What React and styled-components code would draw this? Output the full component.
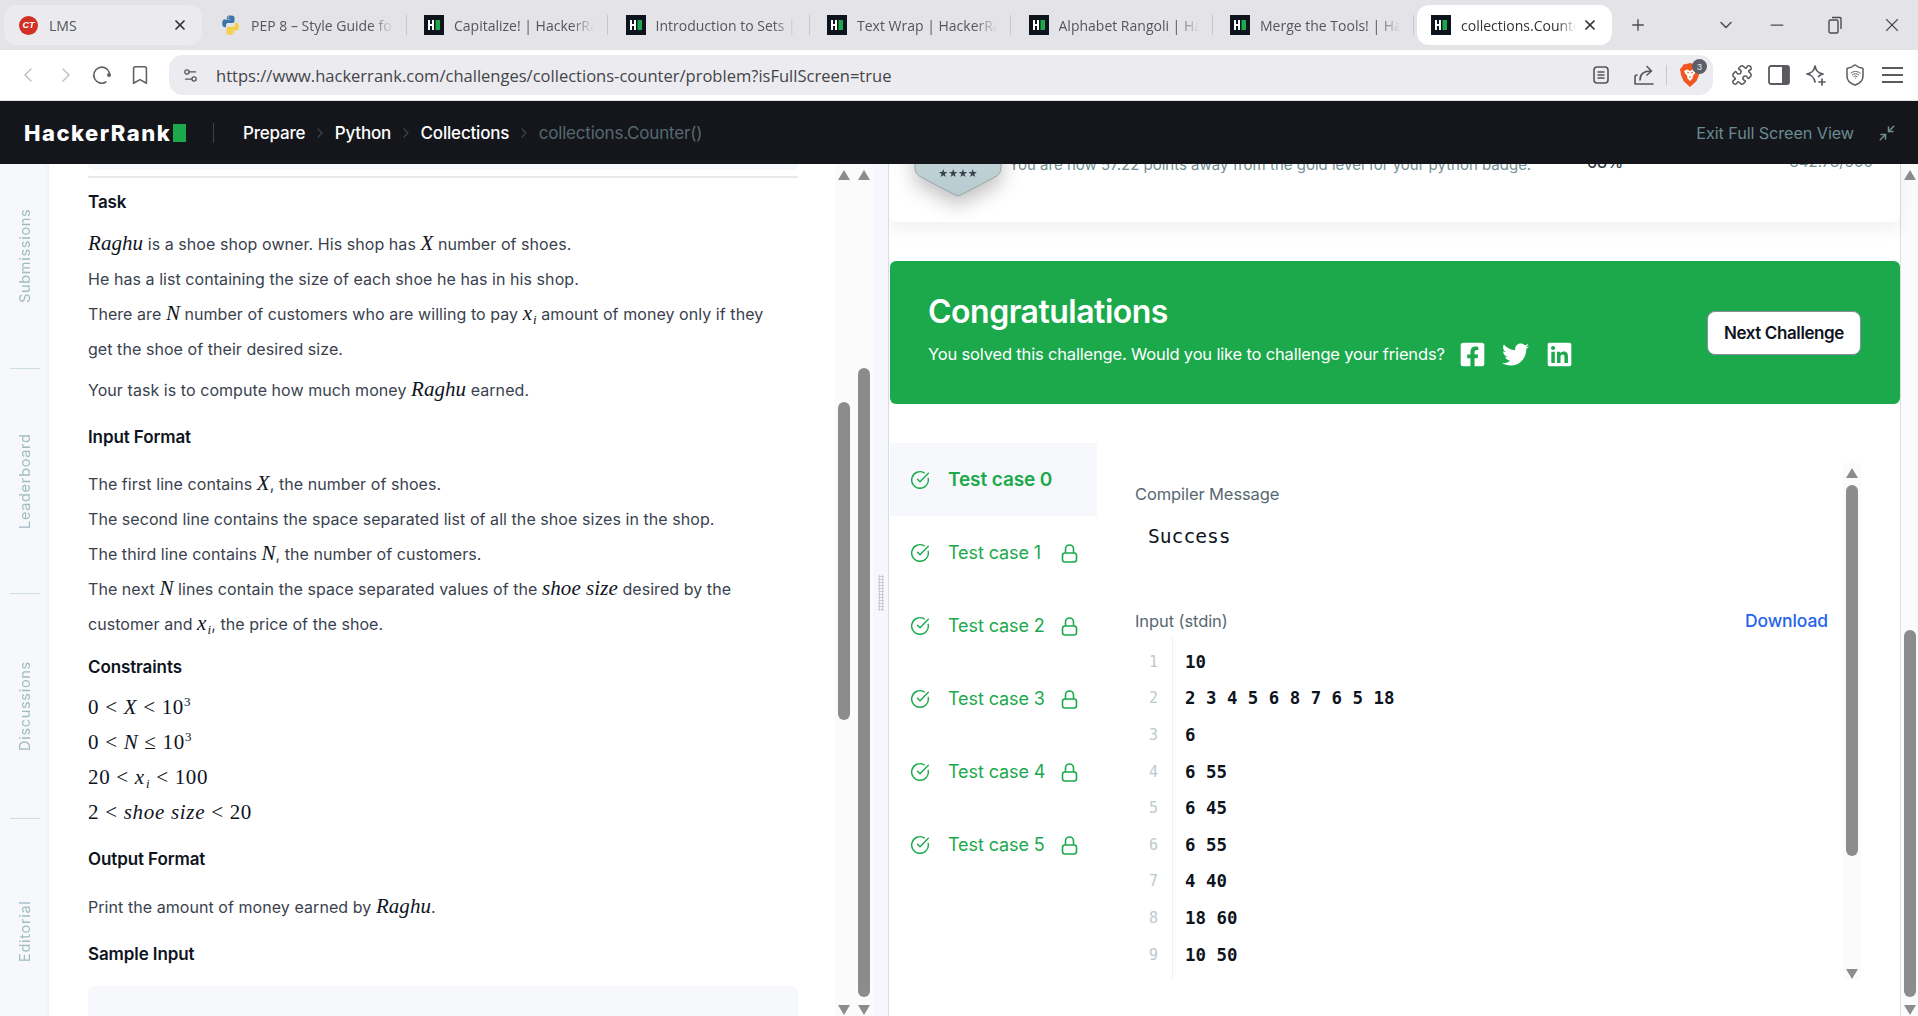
import React from "react";
import styled, { createGlobalStyle } from "styled-components";
import {
  ChevronLeft, ChevronRight, Bookmark, X, Plus, ChevronDown, Minus, Settings2,
  Puzzle, Shield, Wifi, Minimize2, CircleCheckBig,
} from "lucide-react";
import { FaFacebookSquare, FaTwitter, FaLinkedin } from "react-icons/fa";

const Global = createGlobalStyle`
  html, body { margin: 0; padding: 0; background: #fff; overflow: hidden; }
  * { box-sizing: border-box; }
  body { font-family: Inter, "Noto Sans", sans-serif; }
`;

const Page = styled.div`
  width: 1918px; height: 1016px; display: flex; flex-direction: column; overflow: hidden;
`;

/* ---------- browser chrome ---------- */
const TabStrip = styled.div`
  height: 50px; background: #e3e3e8; display: flex; align-items: center; padding-left: 4px; flex: none;
`;
const Tab = styled.div`
  width: ${p => p.$w || 201.5}px; height: 40px; display: flex; align-items: center; flex: none;
  padding: 0 14px 0 ${p => p.$pl || 16}px; border-radius: 12px; position: relative;
  background: ${p => p.$active ? "#fff" : p.$hover ? "#ebebef" : "transparent"};
  margin-left: ${p => p.$ml || 0}px;
  ${p => p.$sep && `&::after { content: ""; position: absolute; right: 0; top: 10px; height: 20px; width: 1px; background: #c6c6cc; }`}
`;
const TabTitle = styled.span`
  flex: 1; min-width: 0; margin-left: ${p => p.$ml || 10}px; white-space: nowrap; overflow: hidden;
  font-family: "Open Sans", sans-serif; font-size: 14px; color: ${p => p.$active ? "#333" : "#55555d"};
  mask-image: ${p => p.$plain ? "none" : "linear-gradient(to right, #000 84%, transparent 100%)"};
`;
const TabClose = styled(X)` width: 16px; height: 16px; color: #333; stroke-width: 2.6; flex: none; margin-left: 6px; `;
const LmsLogo = styled.span`
  width: 19px; height: 19px; border-radius: 50%; background: #d13025; color: #fff; flex: none;
  font: italic 700 9px "Liberation Sans", sans-serif; display: flex; align-items: center; justify-content: center;
`;
const WinControls = styled.div` display: flex; align-items: center; color: #4b4b52; flex: none; `;
const WinBtn = styled.span` display: flex; margin-left: ${p => p.$ml}px; `;

const AddressRow = styled.div`
  height: 51px; background: #fff; display: flex; align-items: flex-start; flex: none;
  border-bottom: 1px solid #e4e4e8; padding-top: 5px; position: relative;
`;
const NavIcons = styled.div` width: 169px; height: 40px; display: flex; align-items: center; padding-left: 16px; color: #5f6064; flex: none; `;
const Nav = styled.span` display: flex; margin-left: ${p => p.$ml || 0}px; color: ${p => p.$c || "#5f6064"}; `;
const AddressBox = styled.div`
  width: 1544px; height: 40px; background: #ebebf0; border-radius: 14px; display: flex; align-items: center;
  padding: 0 5px 0 13px; flex: none; color: #55565a;
`;
const Url = styled.span`
  margin-left: 17px; flex: 1; font-family: "Open Sans", sans-serif; font-size: 16.55px; color: #44454a; white-space: nowrap;
`;
const Divider = styled.span` width: 1px; height: 20px; background: #c8c8cf; margin: 0 13px 0 11px; `;
const BraveWrap = styled.span` position: relative; display: flex; width: 28px; height: 24px; `;
const BraveBadge = styled.span`
  position: absolute; right: 1px; top: -4px; width: 15px; height: 15px; border-radius: 50%; background: #5d5f68; color: #e8e8ec;
  font: 9px "Liberation Sans", sans-serif; display: flex; align-items: center; justify-content: center;
`;
const RightIcons = styled.div` flex: 1; height: 40px; display: flex; align-items: center; color: #5a5b60; padding-left: 18px; `;

/* ---------- site header ---------- */
const Header = styled.header`
  height: 63px; background: #14161b; display: flex; align-items: center; padding: 0 22px 0 24px; flex: none; position: relative; z-index: 2;
`;
const Logo = styled.div`
  font-family: Inter, sans-serif; font-weight: 800; font-size: 22px; color: #fff; letter-spacing: 1.5px; display: flex; align-items: center; width: 189px;
`;
const LogoBlock = styled.span` width: 13px; height: 18px; background: #1ba94c; margin-left: 2px; `;
const HeaderRule = styled.span` width: 1px; height: 20px; background: #39424e; margin-right: 29px; `;
const Crumb = styled.span`
  font-size: 17px; font-weight: ${p => p.$dim ? 400 : 500}; color: ${p => p.$dim ? "#576871" : "#fff"}; letter-spacing: -0.2px; white-space: nowrap;
`;
const CrumbSep = styled(ChevronRight)` width: 16px; height: 16px; color: #39424e; margin: 0 7px 0 6.5px; flex: none; `;
const ExitText = styled.span` margin-left: auto; font-size: 16.25px; color: #6a8a92; letter-spacing: -0.1px; `;
const ExitIcon = styled(Minimize2)` width: 18px; height: 18px; color: #738f93; margin-left: 24px; `;

/* ---------- main ---------- */
const Main = styled.div` flex: 1; display: flex; min-height: 0; overflow: hidden; `;
const SideNav = styled.nav`
  width: 49px; flex: none; background: #f7f8fc; overflow: hidden; display: flex; flex-direction: column; align-items: center;
  box-shadow: inset -4px 0 4px -4px rgba(57,66,78,.1);
`;
const SideItem = styled.div`
  height: 225px; flex: none; display: flex; flex-direction: column; align-items: center; margin-top: ${p => p.$mt || 0}px;
`;
const SideLabel = styled.span`
  flex: 1; writing-mode: vertical-rl; transform: rotate(180deg); text-align: center; font-size: 14.5px; letter-spacing: .7px; color: #9fbcc2;
`;
const SideRule = styled.span` width: 30px; height: 1px; background: #cddfe2; flex: none; `;

const LeftPane = styled.section` width: 786px; flex: none; background: #fff; padding-left: 39px; overflow: hidden; `;
const Problem = styled.div` width: 710px; color: #39424e; font-size: 16px; letter-spacing: 0.06px; `;
const SampleTail = styled.div` height: 6px; background: #f7f8fc; border-radius: 0 0 6px 6px; `;
const Rule = styled.hr` margin: 6px 0 0; border: 0; height: 2px; background: #e7eaec; `;
const H = styled.h3`
  margin: ${p => p.$mt}px 0 0; font-size: 17px; line-height: 24px; font-weight: 600; letter-spacing: -0.1px; color: #0e141e;
`;
const P = styled.p` margin: ${p => p.$mt}px 0 0; line-height: 35px; color: #39424e; `;
const M = styled.span`
  font-family: "Liberation Serif", serif; font-style: ${p => p.$up ? "normal" : "italic"}; font-size: 21px; line-height: 0; color: #0e141e;
  ${p => p.$up && "letter-spacing: .7px;"}
`;
const Sub = styled.span` font-size: 13px; position: relative; top: 4px; margin-left: 1px; `;
const Sup = styled.span` font-size: 13px; position: relative; top: -8px; font-style: normal; `;
const CodeBox = styled.div` margin-top: 20px; height: 60px; background: #f7f8fc; border-radius: 6px; `;

/* scrollbars */
const ScrollGroup = styled.div` width: 38px; flex: none; background: #fbfbfb; display: flex; padding-left: 3px; gap: 8px; `;
const Bar = styled.div`
  width: ${p => p.$w || 12}px; flex: none; display: flex; flex-direction: column; align-items: center; padding: ${p => p.$pad ?? 6}px 0 1px;
`;
const Arrow = styled.span`
  width: 0; height: 0; flex: none; border-left: 6px solid transparent; border-right: 6px solid transparent;
  ${p => p.$down ? "border-top: 10px solid #8c8c8c;" : "border-bottom: 10px solid #8c8c8c;"}
`;
const Thumb = styled.span`
  width: 100%; flex: none; background: #8c8c8c; border-radius: 6px; margin-top: ${p => p.$top}px; height: ${p => p.$h}px;
`;
const BarFill = styled.span` flex: 1; `;
const Gutter = styled.div`
  width: 16px; flex: none; background: #f6f7fc; border-right: 1px solid #dcdce6; display: flex; align-items: flex-start; justify-content: center; padding-top: 411px;
`;
const Grip = styled.span`
  width: 6px; height: 36px; background-image: radial-gradient(circle, #c9ccd4 1px, transparent 1.2px); background-size: 3px 3px;
`;

const RightPane = styled.section` flex: 1; display: flex; min-width: 0; overflow: hidden; `;
const RightContent = styled.div` width: 1011px; flex: none; background: #fff; `;
const RightBar = styled.div` flex: 1; background: #fbfbfb; border-left: 1px solid #dcdce6; display: flex; justify-content: center; `;

const Card = styled.div`
  height: 120px; margin-top: -62px; background: #fff; border-radius: 8px; display: flex; padding-right: 27px; position: relative;
  box-shadow: 0 8px 16px rgba(57,66,78,.07);
`;
const Badge = styled.svg` width: 90px; height: 94px; margin: 2px 0 0 24px; flex: none; filter: drop-shadow(0 8px 10px rgba(0,0,0,.25)); overflow: visible; `;
const CardText = styled.span` width: 578px; margin-left: 6px; padding-top: 52px; font-size: 15px; line-height: 22px; color: #738f93; white-space: nowrap; flex: none; `;
const Percent = styled.span` padding-top: 49px; font-size: 16px; line-height: 22px; font-weight: 500; color: #39424e; `;
const Points = styled.span` margin-left: auto; padding-top: 49px; font-size: 15px; line-height: 22px; color: #738f93; `;

const Banner = styled.div`
  margin: 39px 0 0 1px; height: 143px; background: #1ba94c; border-radius: 6px; display: flex; align-items: center; justify-content: space-between;
  padding: 0 39px 0 38px; color: #fff;
`;
const BannerText = styled.div` margin-top: -7px; `;
const BannerTitle = styled.h2` margin: 0; font-size: 32px; line-height: 40px; font-weight: 600; letter-spacing: -0.5px; `;
const BannerSub = styled.div` margin-top: 10px; height: 24px; display: flex; align-items: center; font-size: 16.5px; letter-spacing: -0.17px; `;
const Social = styled.span` display: flex; margin-left: ${p => p.$ml}px; font-size: 27px; `;
const NextBtn = styled.button`
  width: 154px; height: 44px; border-radius: 8px; background: #fff; border: 1px solid #8d8d9e; font-family: inherit; font-size: 17px; font-weight: 600;
  color: #0e141e; letter-spacing: -0.4px; padding: 0;
`;

const TestArea = styled.div` margin: 39px 0 0 1px; display: flex; `;
const CaseList = styled.div` width: 207px; flex: none; `;
const CaseRow = styled.div`
  height: 73px; display: flex; align-items: center; padding-left: 20px; color: #1ba94c;
  background: ${p => p.$active ? "#f7f8fc" : "transparent"};
`;
const CaseText = styled.span` margin-left: 18px; font-size: ${p => p.$active ? 19 : 18}px; font-weight: ${p => p.$active ? 600 : 400}; letter-spacing: -0.1px; width: 112px; white-space: nowrap; `;
const Detail = styled.div` flex: 1; padding-left: 38px; display: flex; min-width: 0; `;
const DetailBody = styled.div` width: 694px; flex: none; padding-top: 39px; `;
const Label = styled.div` font-size: 16.5px; line-height: 24px; color: #576871; letter-spacing: -0.1px; `;
const Success = styled.pre`
  margin: 19px 0 0 13px; font-family: "DejaVu Sans Mono", monospace; font-size: 19.6px; line-height: 24px; color: #0e141e;
`;
const InputHead = styled.div` margin-top: 60px; display: flex; justify-content: space-between; `;
const Download = styled.span` font-size: 17.5px; line-height: 24px; font-weight: 500; color: #2563eb; letter-spacing: -0.1px; margin-right: 1px; `;
const CodeGrid = styled.div` margin-top: 5px; height: 340px; padding-top: 5.5px; display: flex; flex-direction: column; `;
const CodeLine = styled.div` display: flex; height: 36.6px; align-items: center; flex: none; `;
const LineNo = styled.span`
  width: 23px; text-align: right; font-family: "DejaVu Sans Mono", monospace; font-size: 15px; color: #bcc9cd; flex: none;
`;
const LineText = styled.span`
  margin-left: 27px; font-family: "DejaVu Sans Mono", monospace; font-weight: 700; font-size: 17.4px; color: #0e141e; white-space: pre;
`;
const CodeWrap = styled.div` position: relative; `;
const CodeRule = styled.span` position: absolute; left: 37px; top: 0; bottom: 0; width: 1px; background: #eef0f2; `;
const CodeBar = styled.div` width: 18px; height: 517px; margin: 20px 0 0 14px; background: #fbfbfb; flex: none; display: flex; justify-content: center; `;

/* ---------- drawings ---------- */
const HFav = () => (
  <svg width="20" height="20" viewBox="0 0 20 20" style={{ flex: "none" }}>
    <rect width="20" height="20" fill="#0e141e" />
    <path d="M4 5h2v4h2V5h2v10H8v-4H6v4H4z" fill="#fff" />
    <rect x="11.500" y="5" width="4.500" height="10" fill="#1ba94c" />
  </svg>
);
const PyLogo = () => (
  <svg width="21" height="22" viewBox="0 0 24 24" style={{ flex: "none" }}>
    <path d="M11.900 1C7.600 1 7.900 3 7.900 3v2.200h4.100v.6H5.600S2.500 5.500 2.500 10.100c0 4.600 2.700 4.400 2.700 4.400h1.700v-2.100s-.1-2.700 2.700-2.700h4.500s2.500 0 2.500-2.500V3.500S17 1 11.900 1zM9.600 2.400a.8.8 0 1 1 0 1.600.8.8 0 0 1 0-1.600z" fill="#3b76a8" />
    <path d="M12.100 23c4.300 0 4-2 4-2v-2.200H12v-.6h6.400s3.100.3 3.100-4.300c0-4.600-2.700-4.400-2.700-4.400h-1.700v2.100s.1 2.700-2.700 2.700H9.900s-2.500 0-2.500 2.500v4.200S7 23 12.100 23zm2.300-1.400a.8.8 0 1 1 0-1.600.8.8 0 0 1 0 1.600z" fill="#f7cf47" />
  </svg>
);
const ReloadIcon = () => (
  <svg width="22" height="22" viewBox="0 0 22 22" fill="none" stroke="#5f6064" strokeWidth="1.6" strokeLinecap="round">
    <path d="M18.500 9A8 8 0 1 0 15 18" />
    <circle cx="18" cy="11" r="2" fill="#5f6064" stroke="none" />
  </svg>
);
const ReaderIcon = () => (
  <svg width="18" height="20" viewBox="0 0 18 20" fill="none" stroke="#55565a" strokeWidth="1.6">
    <rect x="2" y="2" width="14" height="16" rx="3" />
    <path d="M5.500 7h7M5.500 10h7M5.500 13h7" />
  </svg>
);
const ShareIcon = () => (
  <svg width="22" height="22" viewBox="0 0 22 22" fill="none" stroke="#55565a" strokeWidth="1.6" strokeLinecap="round" strokeLinejoin="round">
    <path d="M2 20V13c0-1 1-2 2-2M20 20H2" />
    <path d="M7 16c0-6 4-9 11-9M14 2.500L18.500 7 14 11" />
  </svg>
);
const BraveLogo = () => (
  <svg width="20" height="24" viewBox="0 0 20 24">
    <path d="M3.500 1.500L6.500 1 10 0l3.500 1 3 .5 1.500 2.500 2 2-1 6-2.500 6L10 24l-6.500-6L1 12 0 6l2-2z" fill="#f0561f" />
    <path d="M4 8l3-1.500L10 8l3-1.500L16 8l-1.500 3-1.500 1.500-.5 3L10 18l-2.500-2.500-.5-3L5.500 11z" fill="#fff" />
    <path d="M7 9l2 1M13 9l-2 1M10 13v2" stroke="#f0561f" strokeWidth="1" />
  </svg>
);
const SidePanelIcon = () => (
  <svg width="22" height="20" viewBox="0 0 22 20">
    <rect x="1" y="1" width="20" height="18" rx="2" fill="none" stroke="#5a5b60" strokeWidth="1.8" />
    <rect x="14" y="1" width="7" height="18" rx="1" fill="#5a5b60" />
  </svg>
);
const SparkIcon = () => (
  <svg width="22" height="22" viewBox="0 0 22 22" fill="none" stroke="#5a5b60" strokeWidth="1.7" strokeLinejoin="round" strokeLinecap="round">
    <path d="M10 2c1 5 3 7 8 8-2 .5-3.500 1.300-4.500 2.500M10 2c-1 5-3 7-8 8 5 1 7 3 8 8" />
    <path d="M17 15v6M14 18h6" />
  </svg>
);
const HamburgerIcon = () => (
  <svg width="21" height="18" viewBox="0 0 21 18" stroke="#5a5b60" strokeWidth="2"><path d="M0 2h21M0 9h21M0 16h21" /></svg>
);
const ShieldWrap = styled.span` position: relative; display: flex; `;
const ShieldWifi = styled(Wifi)` position: absolute; left: 6.500px; top: 6px; `;
const ShieldIcon = () => (
  <ShieldWrap>
    <Shield size={24} strokeWidth={1.500} />
    <ShieldWifi size={11} strokeWidth={2} />
  </ShieldWrap>
);
const LockIcon = () => (
  <svg width="19" height="20" viewBox="0 0 19 20" fill="none" stroke="#1ba94c" strokeWidth="1.6" style={{ flex: "none" }}>
    <path d="M5.500 10V6a4 4 0 0 1 8 0v4" />
    <rect x="2.500" y="10" width="14" height="9" rx="2.500" />
  </svg>
);
const BadgeArt = () => (
  <Badge viewBox="0 0 90 94">
    <defs>
      <linearGradient id="bg" x1="0" y1="0" x2="0" y2="1">
        <stop offset="0" stopColor="#d6e1e4" />
        <stop offset="1" stopColor="#b7cccf" />
      </linearGradient>
    </defs>
    <path d="M2 -20H88V64Q88 70 82 73L48 91Q45 92.500 42 91L8 73Q2 70 2 64Z" fill="url(#bg)" stroke="#9aa5a8" strokeWidth="1" />
    <text x="45" y="73" textAnchor="middle" fontSize="11" fill="#39424e" fontFamily="DejaVu Sans">★★★★</text>
  </Badge>
);

const tabs = [
  { t: "PEP 8 – Style Guide for Python", py: true },
  { t: "Capitalize! | HackerRank" },
  { t: "Introduction to Sets | HackerRank" },
  { t: "Text Wrap | HackerRank" },
  { t: "Alphabet Rangoli | HackerRank" },
  { t: "Merge the Tools! | HackerRank" },
];
const code = ["10", "2 3 4 5 6 8 7 6 5 18", "6", "6 55", "6 45", "6 55", "4 40", "18 60", "10 50"];
const cases = [0, 1, 2, 3, 4, 5];

export default function App() {
  return (
    <Page>
      <Global />
      <TabStrip>
        <Tab $hover $w={198} $pl={15}>
          <LmsLogo>CT</LmsLogo>
          <TabTitle $plain $ml={11}>LMS</TabTitle>
          <TabClose />
        </Tab>
        <Tab $sep $w={204.500} $pl={18}>
          <PyLogo />
          <TabTitle>{tabs[0].t}</TabTitle>
        </Tab>
        {tabs.slice(1).map(x => (
          <Tab key={x.t} $sep $pl={17.500}>
            <HFav />
            <TabTitle>{x.t}</TabTitle>
          </Tab>
        ))}
        <Tab $active $w={195} $pl={14} $ml={3}>
          <HFav />
          <TabTitle $active>collections.Counter()</TabTitle>
          <TabClose />
        </Tab>
        <WinControls>
          <WinBtn $ml={17}><Plus size={18} strokeWidth={1.8} /></WinBtn>
          <WinBtn $ml={69}><ChevronDown size={20} strokeWidth={1.8} /></WinBtn>
          <WinBtn $ml={31}><Minus size={20} strokeWidth={1.5} /></WinBtn>
          <WinBtn $ml={41}>
            <svg width="14" height="18" viewBox="0 0 14 18" fill="none" stroke="#4b4b52" strokeWidth="1.400">
              <rect x="1" y="4" width="9" height="13" rx="1.500" /><path d="M4 1.500h8a1 1 0 0 1 1 1V13" />
            </svg>
          </WinBtn>
          <WinBtn $ml={39}><X size={22} strokeWidth={1.2} /></WinBtn>
        </WinControls>
      </TabStrip>

      <AddressRow>
        <NavIcons>
          <Nav $c="#b9babf"><ChevronLeft size={24} strokeWidth={1.300} /></Nav>
          <Nav $c="#b9babf" $ml={14}><ChevronRight size={24} strokeWidth={1.300} /></Nav>
          <Nav $ml={13}><ReloadIcon /></Nav>
          <Nav $ml={16}><Bookmark size={22} strokeWidth={1.700} /></Nav>
        </NavIcons>
        <AddressBox>
          <Settings2 size={17} strokeWidth={1.800} />
          <Url>https://www.hackerrank.com/challenges/collections-counter/problem?isFullScreen=true</Url>
          <ReaderIcon />
          <Nav $ml={23}><ShareIcon /></Nav>
          <Divider />
          <BraveWrap>
            <BraveLogo />
            <BraveBadge>3</BraveBadge>
          </BraveWrap>
        </AddressBox>
        <RightIcons>
          <Puzzle size={22} strokeWidth={1.700} />
          <Nav $ml={15} $c="#5a5b60"><SidePanelIcon /></Nav>
          <Nav $ml={15} $c="#5a5b60"><SparkIcon /></Nav>
          <Nav $ml={16} $c="#5a5b60"><ShieldIcon /></Nav>
          <Nav $ml={15} $c="#5a5b60"><HamburgerIcon /></Nav>
        </RightIcons>
      </AddressRow>

      <Header>
        <Logo>HackerRank<LogoBlock /></Logo>
        <HeaderRule />
        <Crumb>Prepare</Crumb><CrumbSep />
        <Crumb>Python</Crumb><CrumbSep />
        <Crumb>Collections</Crumb><CrumbSep />
        <Crumb $dim>collections.Counter()</Crumb>
        <ExitText>Exit Full Screen View</ExitText>
        <ExitIcon />
      </Header>

      <Main>
        <SideNav>
          <SideItem $mt={-20}><SideLabel>Submissions</SideLabel><SideRule /></SideItem>
          <SideItem><SideLabel>Leaderboard</SideLabel><SideRule /></SideItem>
          <SideItem><SideLabel>Discussions</SideLabel><SideRule /></SideItem>
          <SideItem><SideLabel>Editorial</SideLabel><SideRule /></SideItem>
        </SideNav>

        <LeftPane>
          <Problem>
            <SampleTail />
            <Rule />
            <H $mt={12}>Task</H>
            <P $mt={13}>
              <M>Raghu</M> is a shoe shop owner. His shop has <M>X</M> number of shoes.<br />
              He has a list containing the size of each shoe he has in his shop.<br />
              There are <M>N</M> number of customers who are willing to pay <M>x<Sub>i</Sub></M> amount of money only if they<br />
              get the shoe of their desired size.
            </P>
            <P $mt={6}>Your task is to compute how much money <M>Raghu</M> earned.</P>
            <H $mt={17}>Input Format</H>
            <P $mt={18}>
              The first line contains <M>X</M>, the number of shoes.<br />
              The second line contains the space separated list of all the shoe sizes in the shop.<br />
              The third line contains <M>N</M>, the number of customers.<br />
              The next <M>N</M> lines contain the space separated values of the <M>shoe size</M> desired by the<br />
              customer and <M>x<Sub>i</Sub></M>, the price of the shoe.
            </P>
            <H $mt={12.5}>Constraints</H>
            <P $mt={12}>
              <M $up>0 &lt; <M>X</M> &lt; 10<Sup>3</Sup></M><br />
              <M $up>0 &lt; <M>N</M> ≤ 10<Sup>3</Sup></M><br />
              <M $up>20 &lt; <M>x<Sub>i</Sub></M> &lt; 100</M><br />
              <M $up>2 &lt; <M>shoe size</M> &lt; 20</M>
            </P>
            <H $mt={16.5}>Output Format</H>
            <P $mt={19}>Print the amount of money earned by <M>Raghu</M>.</P>
            <H $mt={17}>Sample Input</H>
            <CodeBox />
          </Problem>
        </LeftPane>

        <ScrollGroup>
          <Bar>
            <Arrow />
            <Thumb $top={222} $h={318} />
            <BarFill />
            <Arrow $down />
          </Bar>
          <Bar>
            <Arrow />
            <Thumb $top={188} $h={629} />
            <BarFill />
            <Arrow $down />
          </Bar>
        </ScrollGroup>
        <Gutter><Grip /></Gutter>

        <RightPane>
          <RightContent>
            <Card>
              <BadgeArt />
              <CardText>You are now 57.22 points away from the gold level for your python badge.</CardText>
              <Percent>68%</Percent>
              <Points>842.78/900</Points>
            </Card>
            <Banner>
              <BannerText>
                <BannerTitle>Congratulations</BannerTitle>
                <BannerSub>
                  You solved this challenge. Would you like to challenge your friends?
                  <Social $ml={14}><FaFacebookSquare /></Social>
                  <Social $ml={16}><FaTwitter /></Social>
                  <Social $ml={17}><FaLinkedin /></Social>
                </BannerSub>
              </BannerText>
              <NextBtn>Next Challenge</NextBtn>
            </Banner>
            <TestArea>
              <CaseList>
                {cases.map(n => (
                  <CaseRow key={n} $active={n === 0}>
                    <CircleCheckBig size={20} strokeWidth={1.700} />
                    <CaseText $active={n === 0}>Test case {n}</CaseText>
                    {n > 0 && <LockIcon />}
                  </CaseRow>
                ))}
              </CaseList>
              <Detail>
                <DetailBody>
                  <Label>Compiler Message</Label>
                  <Success>Success</Success>
                  <InputHead>
                    <Label>Input (stdin)</Label>
                    <Download>Download</Download>
                  </InputHead>
                  <CodeWrap>
                    <CodeRule />
                    <CodeGrid>
                      {code.map((c, i) => (
                        <CodeLine key={i}>
                          <LineNo>{i + 1}</LineNo>
                          <LineText>{c}</LineText>
                        </CodeLine>
                      ))}
                    </CodeGrid>
                  </CodeWrap>
                </DetailBody>
                <CodeBar>
                  <Bar $pad={5}>
                    <Arrow />
                    <Thumb $top={7} $h={371} />
                    <BarFill />
                    <Arrow $down />
                  </Bar>
                </CodeBar>
              </Detail>
            </TestArea>
          </RightContent>
          <RightBar>
            <Bar>
              <Arrow />
              <Thumb $top={450} $h={367} />
              <BarFill />
              <Arrow $down />
            </Bar>
          </RightBar>
        </RightPane>
      </Main>
    </Page>
  );
}
